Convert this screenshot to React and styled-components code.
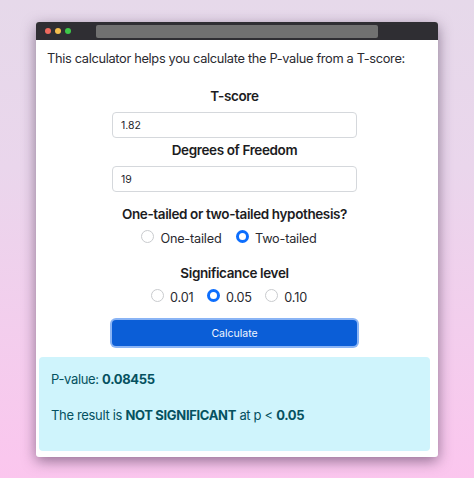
import React from "react";
import styled, { createGlobalStyle } from "styled-components";

const Global = createGlobalStyle`
  html, body { margin: 0; padding: 0; }
  body {
    width: 474px; height: 478px; overflow: hidden;
    background: linear-gradient(180deg, #e6d9ea 0%, #ead6ec 35%, #fbc6ee 100%);
    font-family: Inter, "Liberation Sans", sans-serif;
    -webkit-font-smoothing: antialiased;
  }
`;
const Stage = styled.div`
  padding: 22px 36px 0;
  box-sizing: border-box;
  height: 478px;
`;
const Win = styled.div`
  width: 402px;
  height: 435px;
  background: #fff;
  border-radius: 3px;
  overflow: hidden;
  box-shadow: 0 4px 14px rgba(60, 40, 70, 0.55);
  display: flex;
  flex-direction: column;
`;
const TitleBar = styled.div`
  height: 18px;
  flex: none;
  background: #2f2e33;
  display: flex;
  align-items: center;
  padding-left: 9px;
`;
const Dot = styled.span`
  width: 6px; height: 6px; border-radius: 50%;
  background: ${p => p.$c};
  margin-right: 4px;
`;
const UrlBar = styled.div`
  width: 282px; height: 13px;
  margin-left: 21px;
  border-radius: 2px;
  background: #717171;
`;
const Body = styled.div`
  flex: 1;
  padding: 0 8px 6px 3px;
  display: flex;
  flex-direction: column;
  align-items: center;
`;
const Intro = styled.p`
  align-self: flex-start;
  margin: 10px 0 0 8px;
  font-size: 12.8px;
  letter-spacing: -0.32px;
  line-height: 18px;
  color: #2a2a30;
  white-space: nowrap;
`;
const Label = styled.div`
  font-size: 13.5px;
  font-weight: 600;
  letter-spacing: -0.38px;
  line-height: 18px;
  color: #1c1c22;
  text-align: center;
  margin-top: ${p => p.$top}px;
`;
const Input = styled.input`
  display: block;
  box-sizing: border-box;
  width: 245px;
  height: 26px;
  margin-top: ${p => p.$top}px;
  padding: 0 8px;
  border: 1px solid #d5d8dc;
  border-radius: 4px;
  font: 400 10.5px Inter, sans-serif;
  color: #26262c;
  background: #fff;
  outline: none;
`;
const RadioRow = styled.div`
  display: flex;
  justify-content: center;
  align-items: center;
  gap: ${p => p.$gap}px;
  height: 18px;
  padding-right: 11px;
  margin-top: ${p => p.$top}px;
`;
const Option = styled.label`
  display: flex;
  align-items: center;
  gap: 6px;
  margin-top: 2px;
  font-size: 12.7px;
  letter-spacing: -0.2px;
  color: #2a2a30;
`;
const Radio = styled.span`
  box-sizing: border-box;
  display: block;
  width: 13px; height: 13px;
  margin-top: -3px;
  border-radius: 50%;
  background: #fff;
  border: ${p => (p.$on ? "3.5px solid #0d6efd" : "1px solid #c9cbce")};
`;
const Btn = styled.button`
  display: block;
  width: 245px;
  height: 26px;
  margin-top: 15px;
  border: none;
  border-radius: 4px;
  background: #0b5ed7;
  box-shadow: 0 0 0 2px #8ab4f5;
  color: #f2f7ff;
  font: 400 10.5px Inter, sans-serif;
`;
const Alert = styled.div`
  box-sizing: border-box;
  align-self: stretch;
  margin-top: 11px;
  height: 94px;
  padding: 13px 12px;
  background: #cff4fc;
  border-radius: 4px;
  color: #055160;
  font-size: 13px;
  letter-spacing: -0.33px;
  line-height: 18px;
`;
const Line = styled.p`
  margin: 0 0 18px;
  white-space: nowrap;
`;
const Strong = styled.b`
  font-weight: 700;
`;

export default function App() {
  return (
    <Stage>
      <Global />
      <Win>
        <TitleBar>
          <Dot $c="#ed6a5e" />
          <Dot $c="#f4bf4f" />
          <Dot $c="#3ec84a" />
          <UrlBar />
        </TitleBar>
        <Body>
          <Intro>This calculator helps you calculate the P-value from a T-score:</Intro>
          <Label $top={19}>T-score</Label>
          <Input $top={7} defaultValue="1.82" />
          <Label $top={3}>Degrees of Freedom</Label>
          <Input $top={7} defaultValue="19" />
          <Label $top={13}>One-tailed or two-tailed hypothesis?</Label>
          <RadioRow $gap={14.5} $top={5}>
            <Option><Radio />One-tailed</Option>
            <Option><Radio $on />Two-tailed</Option>
          </RadioRow>
          <Label $top={18}>Significance level</Label>
          <RadioRow $gap={13.5} $top={5}>
            <Option><Radio />0.01</Option>
            <Option><Radio $on />0.05</Option>
            <Option><Radio />0.10</Option>
          </RadioRow>
          <Btn>Calculate</Btn>
          <Alert>
            <Line>P-value: <Strong>0.08455</Strong></Line>
            <Line>The result is <Strong>NOT SIGNIFICANT</Strong> at p &lt; <Strong>0.05</Strong></Line>
          </Alert>
        </Body>
      </Win>
    </Stage>
  );
}
